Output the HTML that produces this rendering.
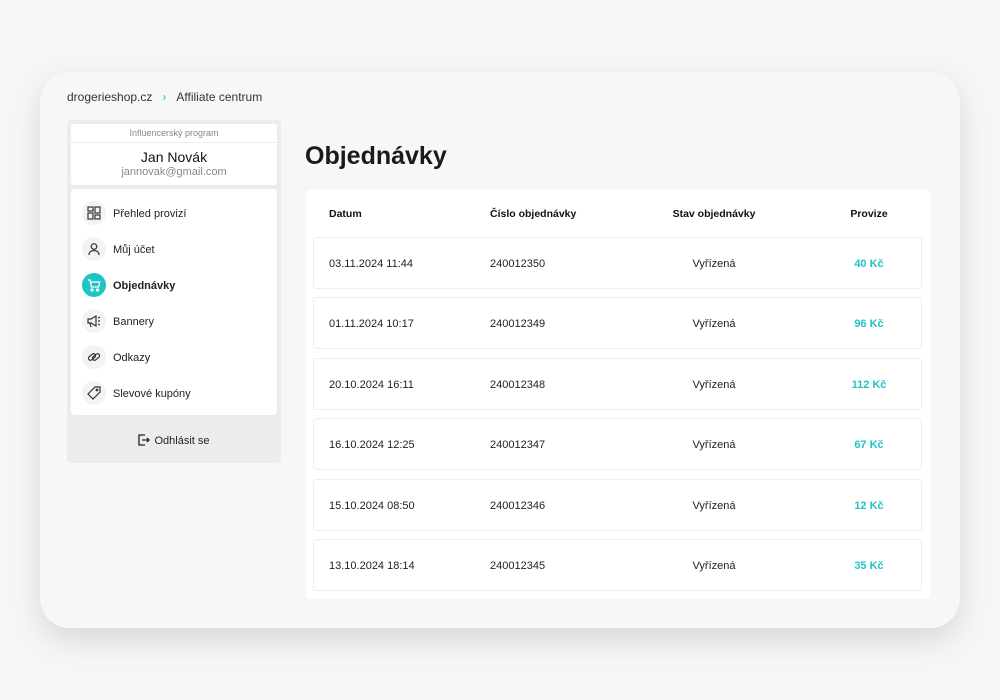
<!DOCTYPE html>
<html><head><meta charset="utf-8"><style>
*{box-sizing:border-box;margin:0;padding:0}
body{width:1000px;height:700px;background:#f6f6f6;font-family:"Liberation Sans",sans-serif;color:#222;position:relative;overflow:hidden}
.card{position:absolute;left:40px;top:72px;width:920px;height:556px;background:#f7f7f7;border-radius:30px;box-shadow:0 12px 30px rgba(0,0,0,.12)}
.bc{position:absolute;left:67px;top:90px;font-size:12px;color:#333}
.bc .ar{color:#20c1c6;margin:0 10px 0 10px}
.side{position:absolute;left:67px;top:120px;width:214px;height:343px;background:#ececec;border-radius:4px}
.head{position:absolute;left:4px;top:4px;width:206px;height:61px;background:#fff;border-radius:3px;text-align:center}
.head .p{font-size:9px;color:#888;height:19px;line-height:19px;border-bottom:1px solid #eee}
.head .n{font-size:14px;margin-top:6px;color:#111}
.head .e{font-size:11px;color:#888;margin-top:1px}
.menu{position:absolute;left:4px;top:69px;width:206px;height:226px;background:#fff;border-radius:3px}
.it{position:absolute;left:11px;height:24px;display:flex;align-items:center;font-size:11px;color:#222}
.it span{position:relative;top:1px}
.ic{width:24px;height:24px;border-radius:50%;background:#f3f3f3;display:flex;align-items:center;justify-content:center;margin-right:7px}
.ic.on{background:#22c3c6}
.it.b{font-weight:bold}
.lo{position:absolute;left:0;width:214px;top:314px;text-align:center;font-size:11px;color:#222}
h1{position:absolute;left:305px;top:142px;font-size:25px;font-weight:bold;color:#1a1a1a}
.tbl{position:absolute;left:306px;top:190px;width:624px;height:409px;background:#fff;border-radius:4px}
.th{position:absolute;top:18px;font-size:10.5px;font-weight:bold;color:#111}
.row{position:absolute;left:7px;width:609px;height:52px;border:1px solid #eee;border-radius:3px;font-size:11px;color:#222}
.row span{position:absolute;top:20px}
.c1{left:15px}.c2{left:176px}.c3{left:340px;width:120px;text-align:center}.c4{left:510px;width:90px;text-align:center;color:#22c3c6;font-weight:bold}
</style></head><body>
<div class="card"></div>
<div class="bc">drogerieshop.cz<span class="ar">&#x203A;</span>Affiliate centrum</div>
<div class="side">
<div class="head"><div class="p">Influencerský program</div><div class="n">Jan Novák</div><div class="e">jannovak@gmail.com</div></div>
<div class="menu">
<div class="it" style="top:12px"><div class="ic"><svg width="14" height="14" viewBox="0 0 14 14" fill="none" stroke="#333" stroke-width="1.2"><rect x="1" y="1" width="5" height="4"/><rect x="8" y="1" width="5" height="6"/><rect x="1" y="7" width="5" height="6"/><rect x="8" y="9" width="5" height="4"/></svg></div><span>Přehled provizí</span></div>
<div class="it" style="top:48px"><div class="ic"><svg width="14" height="14" viewBox="0 0 14 14" fill="none" stroke="#333" stroke-width="1.2"><circle cx="7" cy="4.5" r="2.8"/><path d="M2 13c0-3 2.2-4.5 5-4.5s5 1.5 5 4.5"/></svg></div><span>Můj účet</span></div>
<div class="it b" style="top:84px"><div class="ic on"><svg width="14" height="14" viewBox="0 0 14 14" fill="none" stroke="#fff" stroke-width="1.3"><path d="M1 2h2l1.5 7h7l1.2-5H4"/><circle cx="5" cy="12" r="1"/><circle cx="10.5" cy="12" r="1"/></svg></div><span>Objednávky</span></div>
<div class="it" style="top:120px"><div class="ic"><svg width="14" height="14" viewBox="0 0 14 14" fill="none" stroke="#333" stroke-width="1.2"><path d="M1 5h3l5-3v10L4 9H1z"/><path d="M3 9l1 4"/><path d="M11 4l2-1M11 7h2M11 10l2 1"/></svg></div><span>Bannery</span></div>
<div class="it" style="top:156px"><div class="ic"><svg width="14" height="14" viewBox="0 0 14 14" fill="none" stroke="#333" stroke-width="1.2"><rect x="1" y="5" width="8" height="4" rx="2" transform="rotate(-40 5 7)"/><rect x="5" y="5" width="8" height="4" rx="2" transform="rotate(-40 9 7)"/></svg></div><span>Odkazy</span></div>
<div class="it" style="top:192px"><div class="ic"><svg width="14" height="14" viewBox="0 0 14 14" fill="none" stroke="#333" stroke-width="1.2"><path d="M8 1h5v5l-7 7-5-5z"/><circle cx="10" cy="4" r=".8"/></svg></div><span>Slevové kupóny</span></div>
</div>
<div class="lo"><svg width="12" height="12" viewBox="0 0 12 12" fill="none" stroke="#222" stroke-width="1.3" style="vertical-align:-2px;margin-right:4px"><path d="M7 1H1v10h6M4 6h7M9 4l2 2-2 2"/></svg>Odhlásit se</div>
</div>
<h1>Objednávky</h1>
<div class="tbl">
<div class="th" style="left:23px">Datum</div>
<div class="th" style="left:184px">Číslo objednávky</div>
<div class="th" style="left:348px;width:120px;text-align:center">Stav objednávky</div>
<div class="th" style="left:518px;width:90px;text-align:center">Provize</div>
<div class="row" style="top:47px"><span class="c1">03.11.2024 11:44</span><span class="c2">240012350</span><span class="c3">Vyřízená</span><span class="c4">40 Kč</span></div>
<div class="row" style="top:107px"><span class="c1">01.11.2024 10:17</span><span class="c2">240012349</span><span class="c3">Vyřízená</span><span class="c4">96 Kč</span></div>
<div class="row" style="top:168px"><span class="c1">20.10.2024 16:11</span><span class="c2">240012348</span><span class="c3">Vyřízená</span><span class="c4">112 Kč</span></div>
<div class="row" style="top:228px"><span class="c1">16.10.2024 12:25</span><span class="c2">240012347</span><span class="c3">Vyřízená</span><span class="c4">67 Kč</span></div>
<div class="row" style="top:289px"><span class="c1">15.10.2024 08:50</span><span class="c2">240012346</span><span class="c3">Vyřízená</span><span class="c4">12 Kč</span></div>
<div class="row" style="top:349px"><span class="c1">13.10.2024 18:14</span><span class="c2">240012345</span><span class="c3">Vyřízená</span><span class="c4">35 Kč</span></div>
</div>
</body></html>
